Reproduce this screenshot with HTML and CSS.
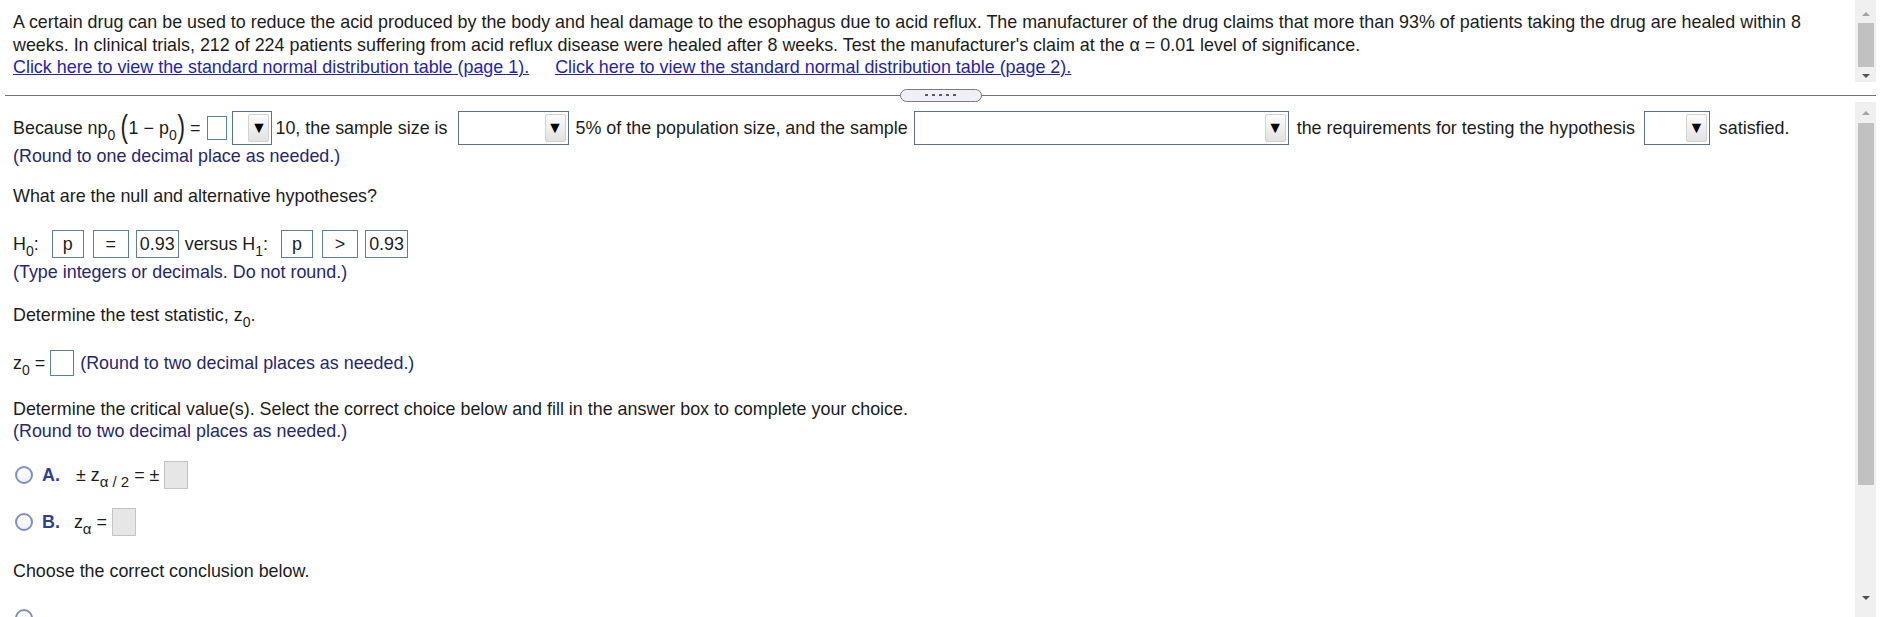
FILE: index.html
```html
<!DOCTYPE html>
<html>
<head>
<meta charset="utf-8">
<title>Hypothesis test</title>
<link rel="stylesheet" href="styles.css">
</head>
<body>
<div class="pane pane-top">
  <div class="content content-top">
    <p class="stem">A certain drug can be used to reduce the acid produced by the body and heal damage to the esophagus due to acid reflux. The manufacturer of the drug claims that more than 93% of patients taking the drug are healed within 8 weeks. In clinical trials, 212 of 224 patients suffering from acid reflux disease were healed after 8 weeks. Test the manufacturer's claim at the α = 0.01 level of significance.</p>
    <p class="links"><a href="#">Click here to view the standard normal distribution table (page 1).</a><a href="#">Click here to view the standard normal distribution table (page 2).</a></p>
  </div>
  <div class="scrollbar sb-top">
    <span class="arrow up"></span>
    <span class="thumb"></span>
    <span class="fill"></span>
    <span class="arrow down"></span>
  </div>
</div>

<div class="divider"><span class="handle"><i></i><i></i><i></i><i></i><i></i></span></div>

<div class="pane pane-bottom">
  <div class="content content-bottom">
    <div class="row row-req">
      <span class="math">Because np<sub>0</sub> <span class="paren">(</span>1 − p<sub>0</sub><span class="paren">)</span> =</span>
      <span class="box box-small"></span>
      <span class="select s1"><span class="btn">▼</span></span>
      <span>10, the sample size is</span>
      <span class="select s2"><span class="btn">▼</span></span>
      <span>5% of the population size, and the sample</span>
      <span class="select s3"><span class="btn">▼</span></span>
      <span>the requirements for testing the hypothesis</span>
      <span class="select s4"><span class="btn">▼</span></span>
      <span>satisfied.</span>
    </div>
    <p class="note note-1">(Round to one decimal place as needed.)</p>

    <p class="question q-hyp">What are the null and alternative hypotheses?</p>

    <div class="row row-hyp">
      <span class="math">H<sub>0</sub>:</span>
      <span class="box ans ans-p">p</span>
      <span class="box ans ans-op">=</span>
      <span class="box ans ans-val">0.93</span>
      <span class="math">versus H<sub>1</sub>:</span>
      <span class="box ans ans-p">p</span>
      <span class="box ans ans-op">&gt;</span>
      <span class="box ans ans-val">0.93</span>
    </div>
    <p class="note note-2">(Type integers or decimals. Do not round.)</p>

    <p class="question q-stat">Determine the test statistic, z<sub>0</sub>.</p>

    <div class="row row-z">
      <span class="math">z<sub>0</sub> =</span>
      <span class="box box-z"></span>
      <span class="note">(Round to two decimal places as needed.)</span>
    </div>

    <p class="question q-crit">Determine the critical value(s). Select the correct choice below and fill in the answer box to complete your choice.</p>
    <p class="note">(Round to two decimal places as needed.)</p>

    <div class="row choice choice-a">
      <span class="radio"></span>
      <span class="letter">A.</span>
      <span class="math expr-a">± z<sub class="greek">α / 2</sub> = ±</span>
      <span class="box gray"></span>
    </div>
    <div class="row choice choice-b">
      <span class="radio"></span>
      <span class="letter">B.</span>
      <span class="math expr-b">z<sub class="greek">α</sub> =</span>
      <span class="box gray"></span>
    </div>

    <p class="question q-concl">Choose the correct conclusion below.</p>

    <div class="row choice choice-next">
      <span class="radio"></span>
    </div>
  </div>
  <div class="scrollbar sb-bottom">
    <span class="arrow up"></span>
    <span class="thumb"></span>
    <span class="fill"></span>
    <span class="arrow down"></span>
  </div>
</div>
</body>
</html>
```

FILE: styles.css
```css
html, body {
  margin: 0;
  padding: 0;
  height: 100%;
}

body {
  font-family: "Liberation Sans", Arial, sans-serif;
  font-size: 17.9px;
  color: #1c1c1c;
  background: #ffffff;
  overflow: hidden;
}

p {
  margin: 0;
}

sub {
  font-size: 14px;
  vertical-align: -6px;
  line-height: 0;
}

/* panes */
.pane {
  display: flex;
}

.pane-top {
  height: 82px;
}

.content {
  flex: 1;
  min-width: 0;
}

.content-top {
  padding: 11px 27px 0 13px;
  line-height: 22.5px;
}

.links {
  display: flex;
  gap: 26px;
}

.links a {
  color: #2323b8;
  text-decoration: underline;
}

/* scrollbars */
.scrollbar {
  width: 21px;
  margin-right: 11px;
  flex-shrink: 0;
  background: #f0f0f0;
  display: flex;
  flex-direction: column;
  align-items: center;
}

.arrow {
  display: flex;
  align-items: center;
  justify-content: center;
  width: 100%;
}

.arrow::before {
  content: "";
  width: 0;
  height: 0;
  border-left: 4px solid transparent;
  border-right: 4px solid transparent;
}

.arrow.up::before {
  border-bottom: 4px solid #a3a3a3;
}

.arrow.down::before {
  border-top: 4px solid #505050;
}

.thumb {
  width: 16px;
  background: #c1c1c1;
}

.fill {
  flex: 1;
}

.sb-top .arrow.up {
  height: 17px;
  margin-top: 5px;
}

.sb-top .thumb {
  margin-top: 1px;
  height: 44px;
}

.sb-top .arrow.down {
  height: 12px;
}

.sb-bottom .arrow.up {
  height: 16px;
  margin-top: 3px;
}

.sb-bottom .thumb {
  margin-top: 2px;
  height: 362px;
}

.sb-bottom .arrow.down {
  height: 16px;
  margin-bottom: 11px;
}

/* divider */
.divider {
  height: 14px;
  margin: 6px 11px 0 5px;
  display: flex;
  align-items: center;
  justify-content: center;
  background: linear-gradient(#6f747b, #6f747b) center / 100% 1px no-repeat;
}

.handle {
  width: 80px;
  height: 11px;
  border: 1px solid #767b85;
  border-radius: 7px;
  background: #eef0f6;
  display: flex;
  align-items: center;
  justify-content: center;
  gap: 4px;
}

.handle i {
  width: 3px;
  height: 2px;
  background: #555a66;
}

/* bottom content */
.pane-bottom {
  height: calc(100% - 102px);
}

.content-bottom {
  padding: 9px 0 0 13px;
  line-height: 22px;
}

.row {
  display: flex;
  align-items: center;
  white-space: nowrap;
}

.row > * {
  flex-shrink: 0;
}

.row-req {
  height: 34px;
}

.paren {
  display: inline-block;
  font-size: 25px;
  line-height: 0;
  transform: scale(0.9, 1.25);
  vertical-align: -1px;
}

.box {
  display: inline-block;
  box-sizing: border-box;
  border: 1px solid #5b7f99;
  background: #fff;
}

.box-small {
  width: 20px;
  height: 24px;
  margin-left: 7px;
}

.select {
  box-sizing: border-box;
  height: 34px;
  border: 1px solid #5a7189;
  background: #fff;
  display: flex;
  justify-content: flex-end;
  padding: 2px;
}

.btn {
  width: 21px;
  box-sizing: border-box;
  border: 1px solid #d2d2d2;
  border-radius: 2px;
  background: linear-gradient(#fbfbfb, #e2e2e2);
  display: flex;
  align-items: center;
  justify-content: center;
  font-size: 16px;
  color: #000;
}

.s1 {
  width: 40px;
  margin: 0 3px 0 5px;
}

.s2 {
  width: 111px;
  margin: 0 7px 0 10px;
}

.s3 {
  width: 375px;
  margin: 0 8px 0 6px;
}

.s4 {
  width: 66px;
  margin: 0 9px 0 9px;
}

.note {
  color: #262673;
}

.q-hyp {
  margin-top: 18px;
}

.row-hyp {
  margin-top: 23px;
  height: 28px;
}

.ans {
  height: 28px;
  display: inline-flex;
  align-items: center;
  justify-content: center;
}

.ans-p {
  width: 32px;
  margin: 0 9px 0 13px;
}

.ans-op {
  width: 36px;
  margin-right: 7px;
}

.ans-val {
  width: 43px;
  margin-right: 6px;
}

.note-2 {
  margin-top: 3px;
}

.q-stat {
  margin-top: 21px;
}

.row-z {
  margin-top: 24px;
  height: 26px;
}

.box-z {
  width: 24px;
  height: 26px;
  margin: 0 6px 0 5px;
}

.q-crit {
  margin-top: 22px;
}

.choice {
  height: 28px;
}

.choice-a {
  margin-top: 19px;
}

.choice-b {
  margin-top: 19px;
}

.radio {
  width: 14px;
  height: 14px;
  border: 2px solid #7d8fc6;
  border-radius: 50%;
  background: linear-gradient(#ffffff, #eef0f7);
  margin-left: 2px;
}

.letter {
  font-weight: bold;
  color: #2f3e99;
  margin-left: 9px;
}

.expr-a {
  margin-left: 16px;
}

.expr-b {
  margin-left: 14px;
}

.greek {
  font-size: 15px;
}

.gray {
  width: 24px;
  height: 28px;
  background: #e6e6e6;
  border-color: #c4c4c4;
  margin-left: 5px;
}

.q-concl {
  margin-top: 24px;
}

.choice-next {
  margin-top: 22px;
}
```
